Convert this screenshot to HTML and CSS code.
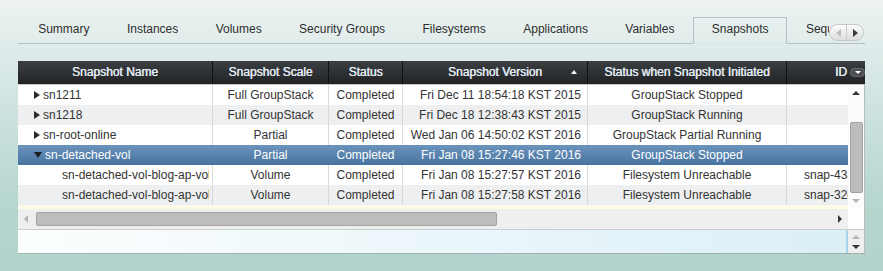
FILE: index.html
```html
<!DOCTYPE html>
<html lang="en">
<head>
    <meta charset="UTF-8">
    <title>Snapshots</title>
    <link rel="stylesheet" href="styles.css">
</head>
<body>
    <div class="page">
        <div class="tabbar">
            <div class="tabs">
                <span class="tab">Summary</span>
                <span class="tab">Instances</span>
                <span class="tab">Volumes</span>
                <span class="tab">Security Groups</span>
                <span class="tab">Filesystems</span>
                <span class="tab">Applications</span>
                <span class="tab">Variables</span>
                <span class="tab active">Snapshots</span>
                <span class="tab">Sequences</span>
            </div>
            <div class="tab-scroll">
                <span class="arr arr-left"></span>
                <span class="arr arr-right"></span>
            </div>
        </div>

        <div class="grid">
            <div class="grid-head">
                <div class="hcell c-name">Snapshot Name</div>
                <div class="hcell c-scale">Snapshot Scale</div>
                <div class="hcell c-status">Status</div>
                <div class="hcell c-version sorted">Snapshot Version<span class="sort-up"></span></div>
                <div class="hcell c-init">Status when Snapshot Initiated</div>
                <div class="hcell c-id">ID<span class="col-menu"></span></div>
            </div>

            <div class="grid-body">
                <div class="rows">
                    <div class="row">
                        <div class="cell c-name"><span class="toggle closed"></span>sn1211</div>
                        <div class="cell c-scale">Full GroupStack</div>
                        <div class="cell c-status">Completed</div>
                        <div class="cell c-version">Fri Dec 11 18:54:18 KST 2015</div>
                        <div class="cell c-init">GroupStack Stopped</div>
                        <div class="cell c-id"></div>
                    </div>
                    <div class="row alt">
                        <div class="cell c-name"><span class="toggle closed"></span>sn1218</div>
                        <div class="cell c-scale">Full GroupStack</div>
                        <div class="cell c-status">Completed</div>
                        <div class="cell c-version">Fri Dec 18 12:38:43 KST 2015</div>
                        <div class="cell c-init">GroupStack Running</div>
                        <div class="cell c-id"></div>
                    </div>
                    <div class="row">
                        <div class="cell c-name"><span class="toggle closed"></span>sn-root-online</div>
                        <div class="cell c-scale">Partial</div>
                        <div class="cell c-status">Completed</div>
                        <div class="cell c-version">Wed Jan 06 14:50:02 KST 2016</div>
                        <div class="cell c-init">GroupStack Partial Running</div>
                        <div class="cell c-id"></div>
                    </div>
                    <div class="row sel">
                        <div class="cell c-name"><span class="toggle open"></span>sn-detached-vol</div>
                        <div class="cell c-scale">Partial</div>
                        <div class="cell c-status">Completed</div>
                        <div class="cell c-version">Fri Jan 08 15:27:46 KST 2016</div>
                        <div class="cell c-init">GroupStack Stopped</div>
                        <div class="cell c-id"></div>
                    </div>
                    <div class="row">
                        <div class="cell c-name child"><span class="clip">sn-detached-vol-blog-ap-volume-01</span></div>
                        <div class="cell c-scale">Volume</div>
                        <div class="cell c-status">Completed</div>
                        <div class="cell c-version">Fri Jan 08 15:27:57 KST 2016</div>
                        <div class="cell c-init">Filesystem Unreachable</div>
                        <div class="cell c-id">snap-43a9e1f2</div>
                    </div>
                    <div class="row alt">
                        <div class="cell c-name child"><span class="clip">sn-detached-vol-blog-ap-volume-02</span></div>
                        <div class="cell c-scale">Volume</div>
                        <div class="cell c-status">Completed</div>
                        <div class="cell c-version">Fri Jan 08 15:27:58 KST 2016</div>
                        <div class="cell c-init">Filesystem Unreachable</div>
                        <div class="cell c-id">snap-32c7d0b5</div>
                    </div>
                    <div class="filler"></div>
                </div>
                <div class="vscroll">
                    <div class="sbtn"><span class="tri-up dark"></span></div>
                    <div class="vtrack"><div class="vthumb"></div></div>
                    <div class="sbtn"><span class="tri-down light"></span></div>
                </div>
            </div>

            <div class="hscroll-row">
                <div class="hscroll">
                    <div class="sbtn"><span class="tri-left light"></span></div>
                    <div class="hthumb"></div>
                    <div class="sbtn push-right"><span class="tri-right dark"></span></div>
                </div>
                <div class="corner"></div>
            </div>
        </div>

        <div class="footer">
            <div class="footer-input"></div>
            <div class="footer-scroll">
                <span class="tri-up light"></span>
                <span class="tri-down dark"></span>
            </div>
        </div>
    </div>
</body>
</html>
```

FILE: styles.css
```css
body {
    margin: 0;
    font-family: "Liberation Sans", Arial, sans-serif;
    font-size: 12px;
    color: #333;
    height: 271px;
    overflow: hidden;
    background: linear-gradient(to bottom, #edf3f3 0, #d3e5e2 90px, #b6d6ce 200px, #b2d3cb 100%);
}
.page {
    width: 847px;
    padding: 17px 18px 0 18px;
}

/* tabs */
.tabbar {
    position: relative;
    height: 26px;
    border-bottom: 1px solid #b7c2c2;
}
.tabs {
    display: flex;
    width: 811px;
    height: 27px;
    padding-left: 1.5px;
    box-sizing: border-box;
    overflow: hidden;
}
.tab {
    flex: none;
    height: 26px;
    line-height: 23px;
    padding: 0 17.7px;
    border: 1px solid transparent;
    border-bottom: 0;
    box-sizing: border-box;
    white-space: nowrap;
    color: #2e2e2e;
}
.tab.active {
    height: 27px;
    border-color: #b7c2c2;
    border-bottom: 1px solid #d9e8e5;
}
.tab-scroll {
    position: absolute;
    right: 1px;
    top: 7px;
    width: 33px;
    height: 15px;
    display: flex;
    border: 1px solid #c3c7c7;
    border-radius: 9px;
    background: linear-gradient(#fbfbfb, #dedede);
}
.arr {
    flex: 1;
    display: flex;
    align-items: center;
    justify-content: center;
}
.arr-left {
    border-right: 1px solid #c9c9c9;
}
.arr-left::before {
    content: "";
    border-right: 5px solid #bdbdbd;
    border-top: 4px solid transparent;
    border-bottom: 4px solid transparent;
}
.arr-right::before {
    content: "";
    border-left: 5px solid #3a3a3a;
    border-top: 4px solid transparent;
    border-bottom: 4px solid transparent;
}

/* grid */
.grid {
    margin-top: 17px;
}
.grid-head {
    display: flex;
    height: 23px;
    border-bottom: 1px solid #c8cacb;
    background: linear-gradient(#3c3f42, #212325);
    color: #e1eaf3;
}
.hcell {
    flex: none;
    box-sizing: border-box;
    line-height: 23px;
    text-align: center;
    white-space: nowrap;
    border-right: 1px solid #111213;
    text-shadow: 0.4px 0 0 #e1eaf3;
}
.c-name { width: 195px; }
.c-scale { width: 116px; }
.c-status { width: 74px; }
.c-version { width: 185px; }
.c-init { width: 199px; }
.hcell.c-id {
    flex: 1;
    border-right: 0;
    display: flex;
    align-items: center;
    justify-content: flex-end;
    gap: 3px;
}
.sorted {
    position: relative;
}
.sort-up {
    position: absolute;
    right: 10px;
    top: 9px;
    border-bottom: 4px solid #f2f2f2;
    border-left: 3px solid transparent;
    border-right: 3px solid transparent;
}
.col-menu {
    width: 15px;
    height: 9px;
    border-radius: 5px;
    background: #4b4d50;
    border: 1px solid #6a6c6e;
    box-sizing: border-box;
    display: flex;
    align-items: center;
    justify-content: center;
}
.col-menu::before {
    content: "";
    border-top: 3px solid #fff;
    border-left: 3px solid transparent;
    border-right: 3px solid transparent;
}

.grid-body {
    display: flex;
    border-right: 1px solid #b5bcbc;
}
.rows {
    width: 830px;
    background: #fdfbe8;
}
.row {
    display: flex;
    height: 20px;
    line-height: 20px;
    background: #fff;
}
.row.alt {
    background: #eeeff0;
}
.row.sel {
    background: linear-gradient(#6a94bc, #4873a0);
    color: #fff;
}
.cell {
    flex: none;
    box-sizing: border-box;
    border-right: 1px solid #dadada;
    overflow: hidden;
    white-space: nowrap;
    text-align: center;
}
.row.sel .cell {
    border-right-color: transparent;
}
.cell.c-name {
    text-align: left;
    padding-left: 16px;
}
.cell.child {
    padding-left: 44px;
    padding-right: 3px;
}
.clip {
    display: block;
    overflow: hidden;
}
.cell.c-version {
    text-align: right;
    padding-right: 6px;
}
.cell.c-id {
    width: 61px;
    text-align: left;
    padding-left: 17px;
    border-right: 0;
}
.toggle {
    display: inline-block;
    vertical-align: middle;
    margin-right: 3px;
    margin-top: -2px;
}
.toggle.closed {
    border-left: 6px solid #2a2a2a;
    border-top: 4px solid transparent;
    border-bottom: 4px solid transparent;
}
.toggle.open {
    border-top: 6px solid #1e1e1e;
    border-left: 4px solid transparent;
    border-right: 4px solid transparent;
}
.filler {
    height: 4px;
}

/* scrollbars */
.sbtn {
    flex: none;
    width: 16px;
    height: 16px;
    display: flex;
    align-items: center;
    justify-content: center;
}
.push-right {
    margin-left: auto;
}
.tri-up, .tri-down, .tri-left, .tri-right {
    display: block;
    width: 0;
    height: 0;
}
.tri-up {
    border-bottom: 4px solid;
    border-left: 4px solid transparent;
    border-right: 4px solid transparent;
}
.tri-down {
    border-top: 4px solid;
    border-left: 4px solid transparent;
    border-right: 4px solid transparent;
}
.tri-left {
    border-right: 4px solid;
    border-top: 4px solid transparent;
    border-bottom: 4px solid transparent;
}
.tri-right {
    border-left: 4px solid;
    border-top: 4px solid transparent;
    border-bottom: 4px solid transparent;
}
.dark { color: #353535; }
.light { color: #b4b4b4; }

.vscroll {
    width: 16px;
    display: flex;
    flex-direction: column;
    background: #fbfbfb;
}
.vtrack {
    flex: 1;
    display: flex;
    justify-content: center;
}
.vthumb {
    width: 13px;
    height: 71px;
    margin-top: 21px;
    box-sizing: border-box;
    background: #bdbdbd;
    border: 1px solid #a2a2a2;
    border-radius: 2px;
}
.hscroll-row {
    display: flex;
    height: 20px;
    border-right: 1px solid #b5bcbc;
}
.hscroll {
    width: 830px;
    display: flex;
    align-items: center;
    background: #efefef;
}
.hscroll .sbtn {
    width: 16px;
}
.hthumb {
    width: 461px;
    height: 14px;
    margin-left: 2px;
    box-sizing: border-box;
    background: #bdbdbd;
    border: 1px solid #a2a2a2;
    border-radius: 2px;
}
.corner {
    width: 16px;
    background: #fff;
}

/* bottom text area */
.footer {
    display: flex;
    height: 23px;
    border-top: 1px solid #c9cdcd;
    border-right: 1px solid #b5bcbc;
    border-bottom: 1px solid #9fb1ae;
}
.footer-input {
    width: 828px;
    border-right: 2px solid #a8d4eb;
    background: linear-gradient(to right, #fcfefe, #dbeff7);
}
.footer-scroll {
    width: 16px;
    display: flex;
    flex-direction: column;
    align-items: center;
    justify-content: center;
    gap: 6px;
    background: #efefef;
}
```
